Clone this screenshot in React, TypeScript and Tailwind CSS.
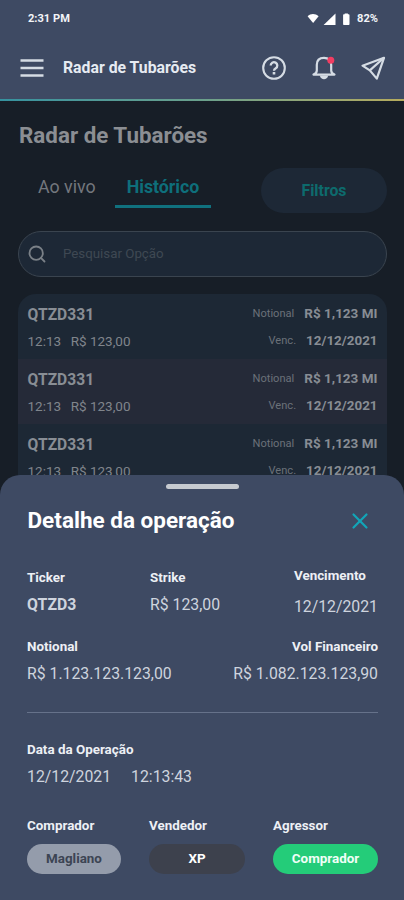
import { Search, X } from "lucide-react";
import clsx from "clsx";
import type { ReactNode } from "react";

type Operation = {
  id: number;
  ticker: string;
  time: string;
  price: string;
  notional: string;
  maturity: string;
};

const operations: Operation[] = [1, 2, 3].map((id) => ({
  id,
  ticker: "QTZD331",
  time: "12:13",
  price: "R$ 123,00",
  notional: "R$ 1,123 MI",
  maturity: "12/12/2021",
}));

export default function App() {
  return (
    <div className="relative flex h-[900px] w-[404px] flex-col overflow-hidden bg-[#171e27] font-[Roboto,sans-serif]">
      <StatusBar />
      <AppHeader />
      <main className="flex flex-col pt-5 pr-[17px] pl-[18px]">
        <h1 className="pl-px text-[22.4px] leading-7 font-bold text-[#8b8e93]">
          Radar de Tubarões
        </h1>
        <div className="mt-[19px] flex h-[45px] items-center">
          <nav className="flex h-full items-start text-[17.8px] leading-[38px]">
            <span className="w-[97px] pl-5 text-[#73777d]">Ao vivo</span>
            <span className="h-[40px] w-[96px] border-b-[3px] border-[#10717e] text-center font-bold text-[#0e6f7b]">
              Histórico
            </span>
          </nav>
          <button className="ml-auto h-[45px] w-[126px] rounded-full bg-[#1d2836] text-[15.8px] font-bold text-[#0d6b6d]">
            Filtros
          </button>
        </div>
        <div className="mt-[18px] flex h-[46px] items-center rounded-full border border-[#3a444f] bg-[#1d2836] pb-px pl-2">
          <Search
            className="size-[20px] text-[#7a8087]"
            strokeWidth={2.2}
            aria-hidden="true"
          />
          <span className="mt-px ml-[16px] text-[13.3px] text-[#3f4853]">
            Pesquisar Opção
          </span>
        </div>
        <section className="mt-[17px] overflow-hidden rounded-t-[18px]">
          {operations.map((operation, index) => (
            <OperationRow
              key={operation.id}
              operation={operation}
              highlighted={index % 2 === 1}
            />
          ))}
        </section>
      </main>
      <OperationSheet />
    </div>
  );
}

function StatusBar() {
  return (
    <div className="flex h-9 shrink-0 items-center bg-[#3e4a63] pt-[2px] pr-[26px] pl-7 text-[11.1px] font-bold text-[#f2f4f8]">
      <span>2:31 PM</span>
      <svg
        className="ml-auto h-3 w-[44px]"
        viewBox="0 0 44 12"
        fill="#fff"
        aria-hidden="true"
      >
        <path d="M.6 3.2C3.6.3 8.4.3 11.6 3.2L6.1 10Z" />
        <path d="M28.5.4V12H16.6Z" />
        <path d="M38.5 1.2h-.8V.4h3.200v.8h.6c.6 0 1 .4 1 1V11c0 .6-.4 1-1 1h-4.400c-.6 0-1-.4-1-1V2.200c0-.6.4-1 1-1Z" />
      </svg>
      <span className="ml-[6px]">82%</span>
    </div>
  );
}

function AppHeader() {
  return (
    <>
      <header className="flex h-[63px] shrink-0 items-center bg-[#3e4a63] pt-px pr-[19px] pl-5 text-[#d5dce4]">
        <MenuIcon />
        <span className="ml-[19px] flex-1 text-[15.8px] font-bold text-[#e6ebf2]">
          Radar de Tubarões
        </span>
        <div className="flex items-center gap-[25.5px]">
          <HelpIcon />
          <BellIcon />
          <SendIcon />
        </div>
      </header>
      <div className="h-0.5 shrink-0 bg-linear-to-r from-[#35929f] via-[#6aa08c] to-[#b5ab5c]" />
    </>
  );
}

function MenuIcon() {
  return (
    <svg
      className="size-6"
      viewBox="0 0 24 24"
      stroke="currentColor"
      strokeWidth="2.4"
      aria-hidden="true"
    >
      <path d="M.5 4.500h23M.5 12h23M.5 19.500h23" />
    </svg>
  );
}

function HelpIcon() {
  return (
    <svg
      className="size-6"
      viewBox="0 0 24 24"
      fill="none"
      stroke="currentColor"
      strokeWidth="2.1"
      aria-hidden="true"
    >
      <circle cx="12" cy="12" r="10.8" />
      <path
        d="M8.700 9.600a3.300 3.300 0 1 1 5.100 2.700c-1.200.8-1.800 1.300-1.800 2.400"
        strokeWidth="2.300"
      />
      <path d="M12 16v2.500" strokeWidth="2.6" />
    </svg>
  );
}

function BellIcon() {
  return (
    <svg
      className="size-6 overflow-visible"
      viewBox="0 0 24 24"
      fill="none"
      stroke="currentColor"
      strokeWidth="2.2"
      strokeLinejoin="round"
      aria-hidden="true"
    >
      <path d="M1.500 18.600h21c-2-.8-3.300-2-3.300-4.200V8.800C19.200 4.400 16.500 1.800 12 1.800S4.800 4.400 4.800 8.800v5.600c0 2.200-1.300 3.400-3.300 4.200Z" />
      <path
        d="M7.800 19.500c.5 2.700 2.300 3.700 4.200 3.700s3.700-1 4.200-3.700Z"
        fill="currentColor"
        stroke="none"
      />
      <circle cx="18.800" cy="4.200" r="3.500" fill="#f23d62" stroke="none" />
    </svg>
  );
}

function SendIcon() {
  return (
    <svg
      className="size-6 overflow-visible"
      viewBox="0 0 24 24"
      fill="none"
      stroke="currentColor"
      strokeWidth="2.2"
      strokeLinejoin="round"
      aria-hidden="true"
    >
      <path d="M23 1.800 1.500 9.700l7.300 4.700 7 8.200Z" />
      <path d="M8.800 14.400 23 1.800" />
    </svg>
  );
}

function OperationRow({
  operation,
  highlighted,
}: {
  operation: Operation;
  highlighted: boolean;
}) {
  return (
    <div
      className={clsx(
        "flex h-[65.2px] justify-between px-[9.5px] pt-[10px] text-[#888d94]",
        highlighted ? "bg-[#252a38]" : "bg-[#1d2835]",
      )}
    >
      <div>
        <p className="text-[15.6px] leading-[22px] font-bold">
          {operation.ticker}
        </p>
        <p className="mt-[6px] flex gap-[9.5px] text-[13.5px] leading-[18px] text-[#80858c]">
          <span>{operation.time}</span>
          <span>{operation.price}</span>
        </p>
      </div>
      <div className="text-right">
        <p className="flex items-center justify-end gap-[10px] leading-[19px]">
          <span className="text-[11.1px] text-[#6b7179]">Notional</span>
          <span className="text-[13.5px] font-bold">{operation.notional}</span>
        </p>
        <p className="mt-2 flex items-center justify-end gap-[10px] leading-[20px]">
          <span className="text-[11.1px] text-[#6b7179]">Venc.</span>
          <span className="text-[13.4px] font-bold">{operation.maturity}</span>
        </p>
      </div>
    </div>
  );
}

function OperationSheet() {
  return (
    <section className="absolute inset-x-0 top-[475px] bottom-0 flex flex-col rounded-t-[20px] bg-[#3e4a63] pt-[9px] pr-[26px] pl-[27px]">
      <div className="h-[5px] w-[73px] self-center rounded-full bg-[#c6cad0]" />
      <div className="mt-[17px] flex h-[30px] items-center justify-between">
        <h2 className="pl-[0.5px] text-[22.5px] font-bold text-white">
          Detalhe da operação
        </h2>
        <X
          className="mr-[5px] size-[26px] text-[#12a5b8]"
          strokeWidth={2}
          aria-hidden="true"
        />
      </div>
      <div className="mt-8 flex">
        <Field className="w-[123px]" label="Ticker">
          <span className="font-bold">QTZD3</span>
        </Field>
        <Field label="Strike">R$ 123,00</Field>
        <Field className="-mt-0.5 ml-auto gap-1" label="Vencimento">
          12/12/2021
        </Field>
      </div>
      <div className="mt-[19px] flex justify-between">
        <Field label="Notional">R$ 1.123.123.123,00</Field>
        <Field className="items-end" label="Vol Financeiro">
          R$ 1.082.123.123,90
        </Field>
      </div>
      <hr className="mt-[27px] border-[#66728a]" />
      <Field className="mt-[27px]" label="Data da Operação">
        <span className="flex gap-[20px]">
          <span>12/12/2021</span>
          <span>12:13:43</span>
        </span>
      </Field>
      <div className="mt-7 flex">
        <Party
          className="w-[122px]"
          label="Comprador"
          pill="w-[94px] bg-[#949cab] text-[#3c4453]"
        >
          Magliano
        </Party>
        <Party label="Vendedor" pill="w-[96px] bg-[#3d414d] text-white">
          XP
        </Party>
        <Party
          className="ml-auto"
          label="Agressor"
          pill="w-[105px] bg-[#24cc79] text-[#f0fff7]"
        >
          Comprador
        </Party>
      </div>
    </section>
  );
}

type FieldProps = { label: string; className?: string; children: ReactNode };

function Field({ label, className, children }: FieldProps) {
  return (
    <div className={clsx("flex flex-col", className)}>
      <span className="text-[13.4px] leading-5 font-bold text-[#edf0f5]">
        {label}
      </span>
      <div className="mt-[6px] text-[15.8px] leading-[22px] text-[#ced4de]">
        {children}
      </div>
    </div>
  );
}

function Party({
  label,
  className,
  pill,
  children,
}: FieldProps & { pill: string }) {
  return (
    <div className={className}>
      <p className="text-[13.4px] leading-5 font-bold text-[#edf0f5]">
        {label}
      </p>
      <span
        className={clsx(
          "mt-2 flex h-[30px] items-center justify-center rounded-full text-[13.4px] font-bold",
          pill,
        )}
      >
        {children}
      </span>
    </div>
  );
}
